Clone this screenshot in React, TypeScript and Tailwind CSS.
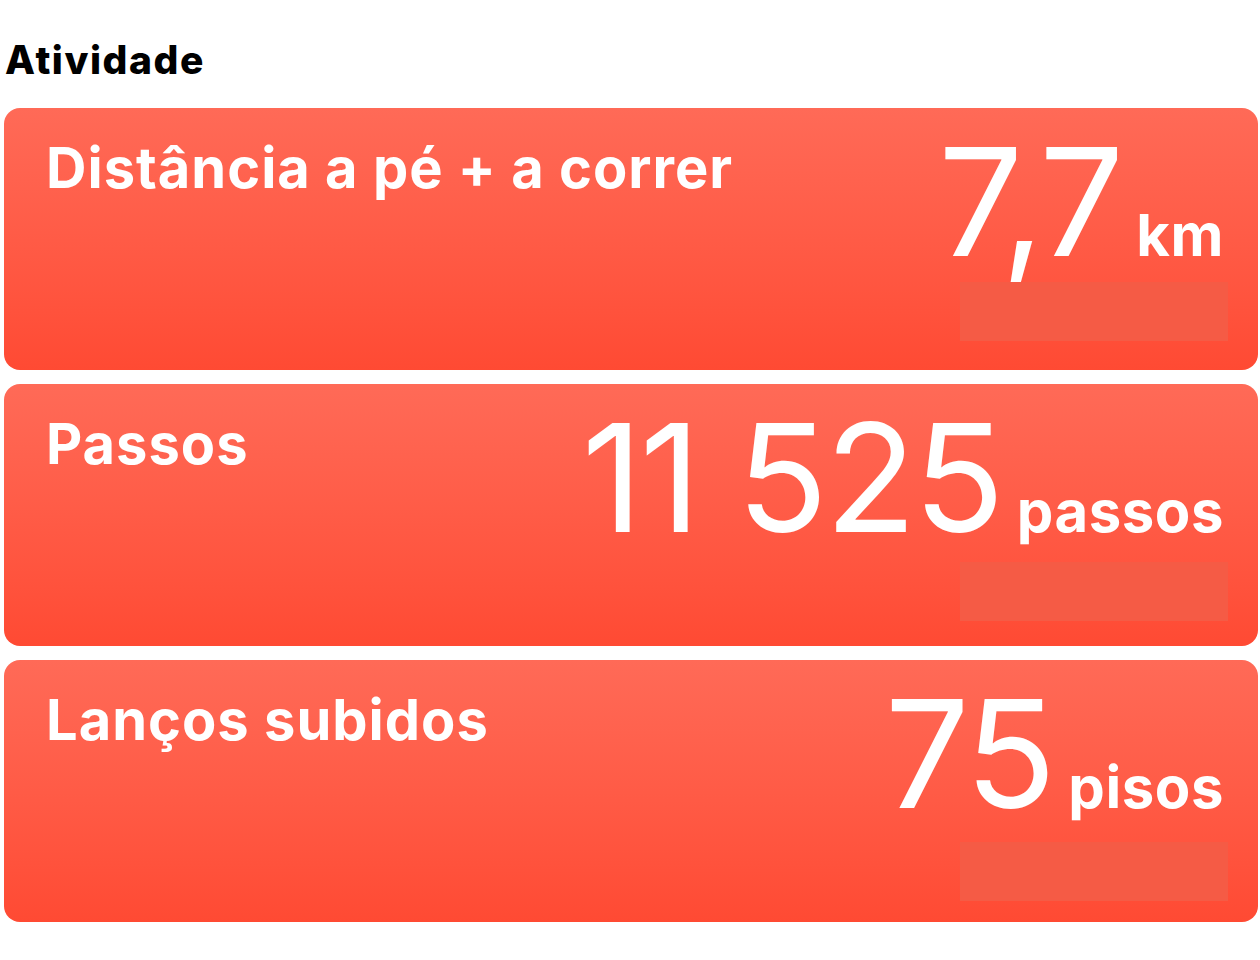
import React from 'react';

type Metric = {
  title: string;
  value: string;
  unit: string;
  barSpacing: string;
};

const metrics: Metric[] = [
  { title: 'Distância a pé + a correr', value: '7,7', unit: 'km', barSpacing: 'pb-[29px]' },
  { title: 'Passos', value: '11 525', unit: 'passos', barSpacing: 'pb-[25px]' },
  { title: 'Lanços subidos', value: '75', unit: 'pisos', barSpacing: 'pb-[21px]' },
];

const MetricCard: React.FC<{ metric: Metric }> = ({ metric }) => (
  <div
    className={`h-[262px] rounded-[16px] bg-gradient-to-b from-[#ff6a57] to-[#ff4a33] pl-[42px] pr-[30px] pt-[32px] ${metric.barSpacing} flex flex-col justify-between`}
  >
    <div className="flex justify-between items-start">
      <h3 className="text-[56px] leading-none font-bold text-white tracking-[0.018em]">{metric.title}</h3>
      <div className="flex items-baseline gap-[15px] mr-[4px] -mt-[13px] text-white">
        <span className="text-[150px] leading-none font-normal tracking-[-0.02em] whitespace-pre">{metric.value}</span>
        <span className="text-[58px] leading-none font-bold tracking-[0.01em]">{metric.unit}</span>
      </div>
    </div>
    {/* faint placeholder bar under the value */}
    <div className="self-end w-[268px] h-[59px] bg-[#f55b45]" />
  </div>
);

export default function App() {
  return (
    <div className="min-h-screen bg-white pt-[40px] pl-[4px] pr-[2px] font-['Inter',sans-serif]">
      <h2 className="pl-[1px] text-[39px] leading-none font-extrabold text-black tracking-[0.04em] mb-[29px]">Atividade</h2>
      <div className="flex flex-col gap-[14px]">
        {metrics.map((m) => (
          <MetricCard key={m.title} metric={m} />
        ))}
      </div>
    </div>
  );
}
